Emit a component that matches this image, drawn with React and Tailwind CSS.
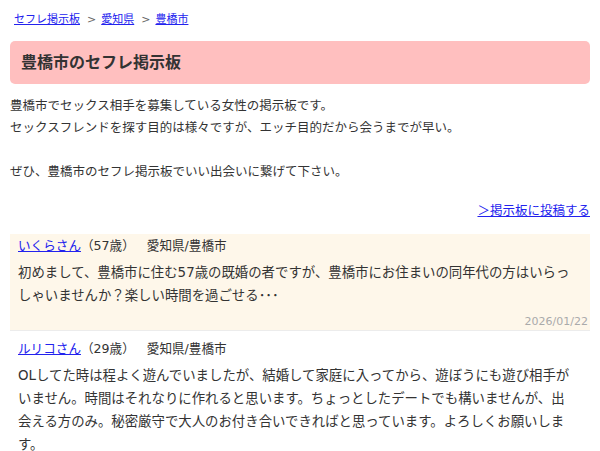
import React from 'react'

const posts = [
  {
    id: 1,
    name: 'いくらさん',
    age: 57,
    area: '愛知県/豊橋市',
    body: '初めまして、豊橋市に住む57歳の既婚の者ですが、豊橋市にお住まいの同年代の方はいらっしゃいませんか？楽しい時間を過ごせる･･･',
    date: '2026/01/22',
  },
  {
    id: 2,
    name: 'ルリコさん',
    age: 29,
    area: '愛知県/豊橋市',
    body: 'OLしてた時は程よく遊んでいましたが、結婚して家庭に入ってから、遊ぼうにも遊び相手がいません。時間はそれなりに作れると思います。ちょっとしたデートでも構いませんが、出会える方のみ。秘密厳守で大人のお付き合いできればと思っています。よろしくお願いします。',
  },
]

function Breadcrumb() {
  const items = ['セフレ掲示板', '愛知県', '豊橋市']
  return (
    <div className="pl-[4px] text-[11px] leading-[16px]">
      {items.map((item, i) => (
        <span key={item}>
          {i > 0 && <span className="ml-[7px] mr-[5px] text-[#666]">&gt;</span>}
          <a href="#" className="text-[#2222ee] underline">{item}</a>
        </span>
      ))}
    </div>
  )
}

function Post({ post, first }) {
  return (
    <div
      className={
        first
          ? 'bg-[#fef7ea] pl-[8px] pr-[2px] pt-[3px] pb-[1px] border-b border-[#ececec]'
          : 'pl-[8px] pr-[2px] pt-[9px]'
      }
    >
      <div className="text-[12.6px] leading-[18px] text-[#333]">
        <a href="#" className="text-[#2222ee] underline">{post.name}</a>
        <span>（{post.age}歳）</span>
        <span className="ml-[12px]">{post.area}</span>
      </div>
      <p className="mt-[6px] pr-[12px] text-[13.4px] leading-[23px] text-[#333]">{post.body}</p>
      {post.date && (
        <div className="mt-[8px] text-right text-[11px] leading-[14px] text-[#aaa]">{post.date}</div>
      )}
    </div>
  )
}

export default function App() {
  return (
    <div className="min-h-screen bg-white px-[10px] pt-[12px] font-['DejaVu_Sans','Noto_Sans_CJK_JP',sans-serif] text-[#333]">
      <Breadcrumb />

      <div className="mt-[13px] flex h-[43px] items-center rounded-[5px] bg-[#ffbfbf] px-[11px]">
        <h1 className="text-[16px] font-bold text-[#333]">豊橋市のセフレ掲示板</h1>
      </div>

      <p className="mt-[11px] text-[12.5px] leading-[22px]">
        豊橋市でセックス相手を募集している女性の掲示板です。
        <br />
        セックスフレンドを探す目的は様々ですが、エッチ目的だから会うまでが早い。
        <br />
        <br />
        ぜひ、豊橋市のセフレ掲示板でいい出会いに繋げて下さい。
      </p>

      <div className="mt-[17px] text-right text-[12.5px] leading-[22px]">
        <a href="#" className="text-[#2222ee] underline">＞掲示板に投稿する</a>
      </div>

      <div className="mt-[12px]">
        {posts.map((p, i) => (
          <Post key={p.id} post={p} first={i === 0} />
        ))}
      </div>
    </div>
  )
}
